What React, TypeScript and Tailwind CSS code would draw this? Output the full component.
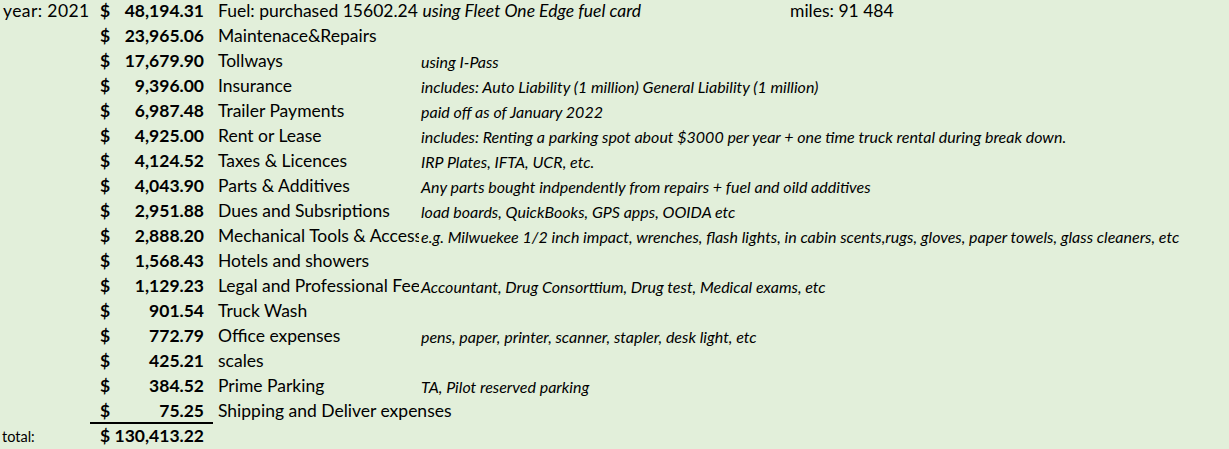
const rows: { amount: string; label: string; note?: string }[] = [
  { amount: '23,965.06', label: 'Maintenace&Repairs' },
  { amount: '17,679.90', label: 'Tollways', note: 'using I-Pass' },
  { amount: '9,396.00', label: 'Insurance', note: 'includes: Auto Liability (1 million) General Liability (1 million)' },
  { amount: '6,987.48', label: 'Trailer Payments', note: 'paid off as of January 2022' },
  { amount: '4,925.00', label: 'Rent or Lease', note: 'includes: Renting a parking spot about $3000 per year + one time truck rental during break down.' },
  { amount: '4,124.52', label: 'Taxes & Licences', note: 'IRP Plates, IFTA, UCR, etc.' },
  { amount: '4,043.90', label: 'Parts & Additives', note: 'Any parts bought indpendently from repairs + fuel and oild additives' },
  { amount: '2,951.88', label: 'Dues and Subsriptions', note: 'load boards, QuickBooks, GPS apps, OOIDA etc' },
  { amount: '2,888.20', label: 'Mechanical Tools & Accessories', note: 'e.g. Milwuekee 1/2 inch impact, wrenches, flash lights, in cabin scents,rugs, gloves, paper towels, glass cleaners, etc' },
  { amount: '1,568.43', label: 'Hotels and showers' },
  { amount: '1,129.23', label: 'Legal and Professional Fees', note: 'Accountant, Drug Consorttium, Drug test, Medical exams, etc' },
  { amount: '901.54', label: 'Truck Wash' },
  { amount: '772.79', label: 'Office expenses', note: 'pens, paper, printer, scanner, stapler, desk light, etc' },
  { amount: '425.21', label: 'scales' },
  { amount: '384.52', label: 'Prime Parking', note: 'TA, Pilot reserved parking' },
  { amount: '75.25', label: 'Shipping and Deliver expenses' },
];

function Money({ amount, underline }: { amount: string; underline?: boolean }) {
  return (
    <div
      className={
        'flex w-[123px] shrink-0 justify-between pl-[10px] pr-[9px] pt-[1px] font-bold ' +
        (underline ? 'h-[24px] border-b-2 border-black' : '')
      }
    >
      <span>$</span>
      <span>{amount}</span>
    </div>
  );
}

export default function App() {
  return (
    <div
      className="h-[449px] w-[1229px] overflow-hidden bg-[#e2efda] text-[17.5px] leading-[20px] text-black"
      style={{ fontFamily: 'Lato, sans-serif' }}
    >
      <div className="flex h-[25px] items-start">
        <div className="w-[90px] shrink-0 whitespace-nowrap pl-[3px] pt-[1px] tracking-[0.4px]">year: 2021</div>
        <Money amount="48,194.31" />
        <div className="w-[206px] shrink-0 whitespace-nowrap pl-[5px] pt-[1px]">
          Fuel: purchased 15602.24 <i>using Fleet One Edge fuel card</i>
        </div>
        <div className="w-[371px] shrink-0" />
        <div className="whitespace-nowrap pt-[1px]">miles: 91 484</div>
      </div>
      {rows.map((r, i) => (
        <div key={i} className="flex h-[25px] items-start">
          <div className="w-[90px] shrink-0" />
          <Money amount={r.amount} underline={i === rows.length - 1} />
          <div
            className={
              'shrink-0 whitespace-nowrap pl-[5px] pt-[1px] ' +
              (r.note ? 'w-[206px] overflow-hidden' : '')
            }
          >
            {r.label}
          </div>
          {r.note && (
            <div className="whitespace-nowrap pl-[2px] pt-[2px] text-[16px] italic">{r.note}</div>
          )}
        </div>
      ))}
      <div className="flex h-[25px] items-start">
        <div className="w-[90px] shrink-0 pl-[2px] pt-[2px] text-[14.5px]">total:</div>
        <div className="flex w-[123px] shrink-0 justify-between pl-[10px] pr-[9px] pt-[1px] font-bold">
          <span>$</span>
          <span>130,413.22</span>
        </div>
      </div>
    </div>
  );
}
